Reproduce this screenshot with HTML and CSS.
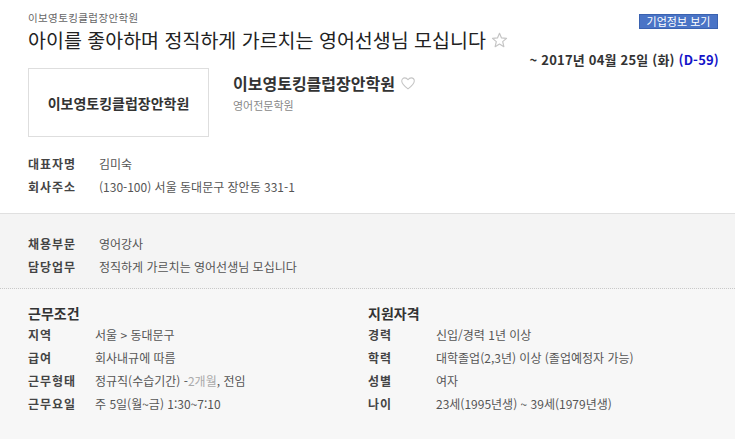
FILE: index.html
```html
<!DOCTYPE html>
<html lang="ko">
<head>
  <meta charset="UTF-8" />
  <meta name="viewport" content="width=device-width, initial-scale=1.0"/>
  <title>채용공고</title>
  <link rel="stylesheet" href="styles.css">
</head>
<body>

  <!-- 상단: 공고 제목 / 회사 정보 -->
  <div class="top">
    <div class="head">
      <div class="head-left">
        <div class="co-small">이보영토킹클럽장안학원</div>
        <h1 class="title">아이를 좋아하며 정직하게 가르치는 영어선생님 모십니다
          <svg class="star" viewBox="0 0 16 16" width="17" height="17">
            <path d="M8 1.2 L9.9 5.6 L14.6 6 L11 9.1 L12.1 13.8 L8 11.3 L3.9 13.8 L5 9.1 L1.4 6 L6.1 5.6 Z" fill="none" stroke="#c4c4c4" stroke-width="1.1" stroke-linejoin="round"/>
          </svg>
        </h1>
      </div>
      <a class="info-btn" href="#">기업정보 보기</a>
    </div>

    <div class="deadline">~ 2017년 04월 25일 (화) <span class="dday">(D-59)</span></div>

    <div class="company">
      <div class="logo-box">이보영토킹클럽장안학원</div>
      <div class="company-info">
        <div class="company-name">이보영토킹클럽장안학원
          <svg class="heart" viewBox="0 0 16 16" width="16" height="15">
            <path d="M8 13.8 C4 10.8 1.3 8.4 1.3 5.4 C1.3 3.4 2.8 2 4.6 2 C6 2 7.2 2.8 8 4 C8.8 2.8 10 2 11.4 2 C13.2 2 14.7 3.4 14.7 5.4 C14.7 8.4 12 10.8 8 13.8 Z" fill="none" stroke="#c4c4c4" stroke-width="1.1" stroke-linejoin="round"/>
          </svg>
        </div>
        <div class="company-type">영어전문학원</div>
      </div>
    </div>

    <dl class="rows">
      <div class="row"><dt>대표자명</dt><dd>김미숙</dd></div>
      <div class="row"><dt>회사주소</dt><dd>(130-100) 서울 동대문구 장안동 331-1</dd></div>
    </dl>
  </div>

  <!-- 모집 부문 -->
  <div class="job">
    <dl class="rows">
      <div class="row"><dt>채용부문</dt><dd>영어강사</dd></div>
      <div class="row"><dt>담당업무</dt><dd>정직하게 가르치는 영어선생님 모십니다</dd></div>
    </dl>
  </div>

  <!-- 근무조건 / 지원자격 -->
  <div class="cond">
    <div class="col">
      <h2>근무조건</h2>
      <dl class="list">
        <div class="row"><dt>지역</dt><dd>서울 &gt; 동대문구</dd></div>
        <div class="row"><dt>급여</dt><dd>회사내규에 따름</dd></div>
        <div class="row"><dt>근무형태</dt><dd>정규직(수습기간) -<span class="muted">2개월</span>, 전임</dd></div>
        <div class="row"><dt>근무요일</dt><dd>주 5일(월~금) 1:30~7:10</dd></div>
      </dl>
    </div>
    <div class="col">
      <h2>지원자격</h2>
      <dl class="list">
        <div class="row"><dt>경력</dt><dd>신입/경력 1년 이상</dd></div>
        <div class="row"><dt>학력</dt><dd>대학졸업(2,3년) 이상 (졸업예정자 가능)</dd></div>
        <div class="row"><dt>성별</dt><dd>여자</dd></div>
        <div class="row"><dt>나이</dt><dd>23세(1995년생) ~ 39세(1979년생)</dd></div>
      </dl>
    </div>
  </div>

</body>
</html>
```

FILE: styles.css
```css
/* ===== 기본 ===== */
body {
  margin: 0;
  padding: 0;
  background: #f7f7f7;
  font-family: "Noto Sans CJK KR", "Noto Sans", sans-serif;
  font-size: 12px;
  color: #555;
  overflow: hidden;
}

dl, dd, h1, h2 {
  margin: 0;
}

/* ===== 상단 영역 ===== */
.top {
  background: #fff;
  padding: 10px 16px 15px 28px;
  border-bottom: 1px solid #e0e0e0;
}

.head {
  display: flex;
  justify-content: space-between;
  align-items: flex-start;
}

.co-small {
  font-size: 10.5px;
  letter-spacing: 0.4px;
  line-height: 16px;
  color: #666;
}

.title {
  margin-top: 2px;
  font-size: 19.5px;
  font-weight: normal;
  line-height: 24px;
  color: #222;
  display: flex;
  align-items: center;
  gap: 5px;
}

.star {
  display: block;
}

.info-btn {
  margin-top: 4px;
  margin-right: 1px;
  width: 79px;
  height: 15px;
  box-sizing: border-box;
  background: #4a74c6;
  border: 1px solid #3a62b0;
  color: #fff;
  font-size: 11px;
  line-height: 13px;
  text-align: center;
  text-decoration: none;
}

.deadline {
  text-align: right;
  font-size: 13px;
  font-weight: bold;
  letter-spacing: 0.2px;
  line-height: 16px;
  color: #333;
}

.dday {
  color: #1414c8;
}

/* ===== 회사 정보 ===== */
.company {
  display: flex;
  gap: 24px;
}

.logo-box {
  width: 181px;
  height: 69px;
  box-sizing: border-box;
  border: 1px solid #dedede;
  display: flex;
  align-items: center;
  justify-content: center;
  font-size: 14px;
  font-weight: bold;
  color: #333;
}

.company-name {
  margin-top: 5px;
  display: flex;
  align-items: center;
  gap: 5px;
  font-size: 16px;
  font-weight: bold;
  line-height: 20px;
  color: #333;
}

.company-type {
  margin-top: 4px;
  font-size: 11px;
  line-height: 16px;
  color: #888;
}

/* ===== 항목 행 ===== */
.rows {
  margin-top: 15px;
}

.row {
  display: flex;
  line-height: 23px;
}

.row dt {
  width: 71px;
  flex: none;
  font-weight: bold;
  letter-spacing: 1px;
  color: #444;
}

.row dd {
  color: #555;
}

/* ===== 모집 부문 ===== */
.job {
  background: #f4f4f4;
  padding: 3px 28px 10px;
  border-bottom: 1px dotted #c8c8c8;
}

/* ===== 근무조건 / 지원자격 ===== */
.cond {
  display: grid;
  grid-template-columns: 340px 1fr;
  padding: 14px 28px 0;
}

.cond h2 {
  font-size: 14px;
  line-height: 20px;
  color: #333;
}

.list .row dt {
  width: 67px;
}

.cond .col + .col .list .row dt {
  width: 68px;
}

.muted {
  color: #aaa;
}
```
